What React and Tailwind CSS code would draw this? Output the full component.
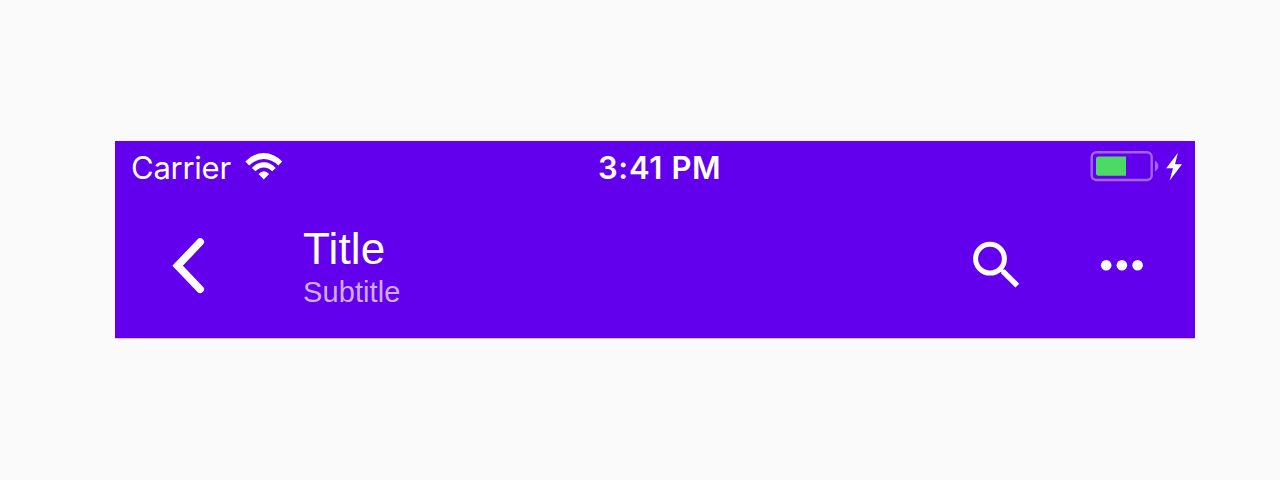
function WifiIcon() {
  return (
    <svg width="40" height="30" viewBox="244 151 40 30" fill="#fff" className="shrink-0">
      <path d="M245.3 161.6Q253.5 153 263.8 153Q274 153 282.3 161.6L278.4 165.5Q271.8 159 263.8 159Q255.6 159 249.2 165.5Z" />
      <path d="M251.9 167.9Q257 162.3 263.8 162.3Q270.6 162.3 275.7 167.9L272.2 171.3Q268.5 167.5 263.8 167.5Q259.1 167.5 255.4 171.3Z" />
      <path d="M258.5 174.1Q261 171.3 263.8 171.3Q266.6 171.3 269.1 174.1L263.8 179.4Z" />
    </svg>
  );
}

function BatteryIcon() {
  return (
    <svg width="96" height="34" viewBox="1089 149 96 34" className="shrink-0">
      <rect x="1091.7" y="152.2" width="60" height="27.8" rx="4.8" fill="none" stroke="#a166f5" strokeWidth="2.4" />
      <path d="M1126 156.500V175.8H1098.5Q1096 175.8 1096 173.3V159Q1096 156.500 1098.500 156.500H1126Z" fill="#4cd964" />
      <path d="M1155 160.700Q1158.400 162.500 1158.400 166T1155 171.400Z" fill="#a166f5" />
      <path d="M1178 152.700L1166.200 168.200H1173L1169.700 180.500L1182 164.200H1175Z" fill="#fff" />
    </svg>
  );
}

export default function App() {
  return (
    <div className="h-[480px] w-[1280px] overflow-hidden bg-[#fafafa] pl-[115px] pt-[141px]">
      <header className="h-[197px] w-[1080px] bg-[#6200ee] text-white shadow-[0_1px_0_#d9bff9]">
        <div className="grid h-[50px] grid-cols-3 items-center font-['Inter',sans-serif] leading-[44px]">
          <div className="flex items-center pl-[16px]">
            <span className="w-[113px] pt-[3px] text-[31px] tracking-[-0.25px]">Carrier</span>
            <WifiIcon />
          </div>
          <div className="pl-[123px] pt-[3px] text-[31px] font-semibold tracking-[0.65px] whitespace-nowrap">3:41 PM</div>
          <div className="flex justify-end pr-[10px]">
            <BatteryIcon />
          </div>
        </div>
        <div className="flex h-[147px] pt-[35px]">
          <button aria-label="Back" className="ml-[50px] h-[78px] w-[48px]">
            <svg width="48" height="78" viewBox="165 226 48 78" fill="none" stroke="#fff" strokeWidth="7.6" strokeLinecap="round" strokeLinejoin="miter">
              <path d="M200.200 242L177.600 265.700L200.200 289.300" />
            </svg>
          </button>
          <div className="ml-[89px] w-[400px] pl-px font-['Liberation_Sans',sans-serif]">
            <h1 className="h-[48px] text-[44px] leading-[46px] tracking-[0.2px]">Title</h1>
            <p className="h-[36px] text-[29px] leading-[36px] tracking-[0.1px] text-[#cfaef9]">Subtitle</p>
          </div>
          <button aria-label="Search" className="ml-[266px] h-[66px] w-[60px]">
            <svg width="60" height="66" viewBox="968 226 60 66" fill="none" stroke="#fff">
              <circle cx="990" cy="258.700" r="14.400" strokeWidth="5" />
              <path d="M999.500 268.200L1003.500 272" strokeWidth="3.500" />
              <path d="M1002.700 271.200L1017.300 285.600" strokeWidth="5.4" />
            </svg>
          </button>
          <button aria-label="More" className="ml-[67px] h-[60px] w-[54px]">
            <svg width="54" height="60" viewBox="1095 226 54 60" fill="#fff">
              <circle cx="1106.200" cy="265.300" r="5.300" />
              <circle cx="1121.900" cy="265.300" r="5.300" />
              <circle cx="1137.600" cy="265.300" r="5.300" />
            </svg>
          </button>
        </div>
      </header>
    </div>
  );
}
